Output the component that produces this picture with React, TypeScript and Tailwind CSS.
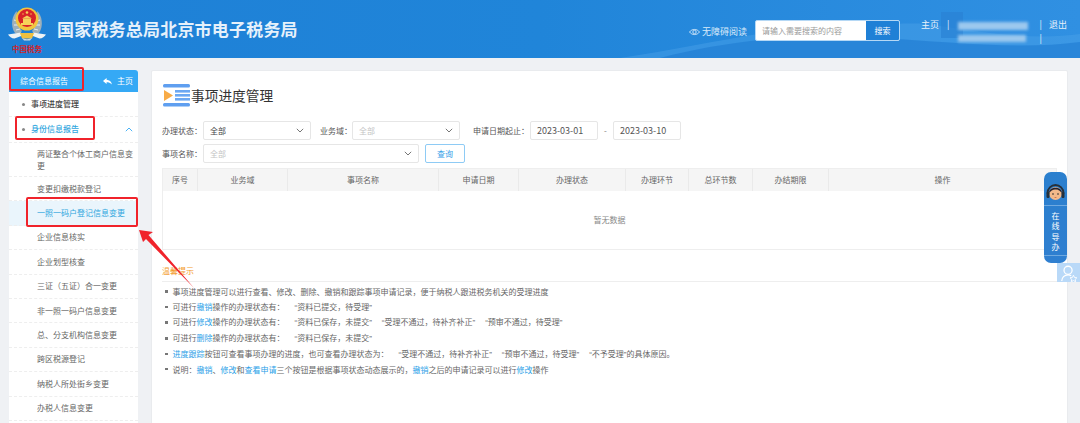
const MENU = [
  { label: '两证整合个体工商户信息变更', tall: true },
  { label: '变更扣缴税款登记' },
  { label: '一照一码户登记信息变更', active: true },
  { label: '企业信息核实' },
  { label: '企业划型核查' },
  { label: '三证（五证）合一变更' },
  { label: '非一照一码户信息变更' },
  { label: '总、分支机构信息变更' },
  { label: '跨区税源登记' },
  { label: '纳税人所处街乡变更' },
  { label: '办税人信息变更' },
]

const COLUMNS = [
  { label: '序号', w: 'w-[35px]' },
  { label: '业务域', w: 'w-[90px]' },
  { label: '事项名称', w: 'w-[151px]' },
  { label: '申请日期', w: 'w-[80px]' },
  { label: '办理状态', w: 'w-[107px]' },
  { label: '办理环节', w: 'w-[63px]' },
  { label: '总环节数', w: 'w-[64px]' },
  { label: '办结期限', w: 'w-[76px]' },
  { label: '操作', w: 'flex-1' },
]

function Emblem() {
  return (
    <svg width="38" height="35" viewBox="0 0 38 35" className="shrink-0">
      <path d="M7 27C2 20 4 9 9 5c-1 7 0 14 5 20l-3 3z" fill="#9fb0ba" />
      <path d="M31 27c5-7 3-18-2-22 1 7 0 14-5 20l3 3z" fill="#9fb0ba" />
      <path d="M8 9l3 2M6 14l4 1M6 19l4 0M8 24l4-1M30 9l-3 2M32 14l-4 1M32 19l-4 0M30 24l-4-1" stroke="#e8edf0" strokeWidth="1" />
      <path d="M0 28.500l13-2 1.500 3-8 3c-3 0-5-2-6.500-4zM38 28.500l-13-2-1.500 3 8 3c3 0 5-2 6.500-4z" fill="#eef2f4" />
      <path d="M12 27h14l-2 5.500h-10z" fill="#efc040" />
      <path d="M14 32c3 1.500 7 1.500 10 0l-2 2.500h-6z" fill="#cfd8de" />
      <circle cx="19" cy="13" r="11.500" fill="#f2c53f" />
      <circle cx="19" cy="12" r="9" fill="#d8232a" />
      <path d="M13 17h12v2H13zM15 12.500h8v4.500h-8z" fill="#f6d25a" />
      <path d="M14 12.500h10l-5-3z" fill="#f6d25a" />
      <circle cx="19" cy="6.500" r="1.300" fill="#f6d25a" />
      <circle cx="15" cy="8" r="0.700" fill="#f6d25a" />
      <circle cx="23" cy="8" r="0.700" fill="#f6d25a" />
    </svg>
  )
}

function Mountains() {
  return (
    <svg viewBox="0 0 1080 58" preserveAspectRatio="none" className="absolute inset-0 h-full w-full">
      <path d="M620 58C700 46 760 30 850 22c30 6 60-2 90 4 50 8 100 14 140 8v24z" fill="#4ba2e8" opacity="0.45" />
      <rect x="941" y="12" width="22" height="26" fill="#2a82d4" opacity="0.7" />
      <path d="M660 58c70-18 150-26 220-20 70 4 140 12 200 4v16z" fill="#1c78cf" opacity="0.55" />
    </svg>
  )
}

function Chevron({ className }: { className: string }) {
  return (
    <svg width="8" height="5" viewBox="0 0 8 5" fill="none" className={className}>
      <path d="M.8.8 4 4l3.2-3.2" stroke="currentColor" strokeWidth="0.9" />
    </svg>
  )
}

function Header() {
  return (
    <header className="relative flex h-[58px] items-center bg-gradient-to-r from-[#1e80d6] via-[#2085d9] to-[#3090e2] text-white">
      <Mountains />
      <div className="relative ml-[8px] flex w-[38px] flex-col items-center pt-[1px]">
        <Emblem />
        <span className="mt-[3px] whitespace-nowrap text-[7.5px] leading-[9px] font-bold text-[#d3232a]">中国税务</span>
      </div>
      <h1 className="relative ml-[11px] text-[17px] font-bold tracking-[0.2px] text-[#e6f1fb]">国家税务总局北京市电子税务局</h1>
      <div className="relative ml-auto flex items-center pr-[13px] pt-[2px]">
        <svg width="11" height="8" viewBox="0 0 11 8" fill="none" stroke="#e6f1fb" strokeWidth="0.8" className="mr-[2px] mt-[3px]">
          <path d="M.5 4C3 .6 8 .6 10.5 4 8 7.4 3 7.4.5 4z" />
          <circle cx="5.5" cy="4" r="1.7" />
        </svg>
        <span className="mt-[3px] text-[9px] text-[#d9ebfa]">无障碍阅读</span>
        <div className="ml-[8px] flex h-[21px] w-[145px] overflow-hidden rounded-[2px] border border-[#b5d8f5] bg-white">
          <span className="flex-1 pl-[6px] text-[8px] leading-[19px] text-[#9a9a9a]">请输入需要搜索的内容</span>
          <span className="w-[33px] bg-[#1f80d6] text-center text-[8px] leading-[19px] text-white">搜索</span>
        </div>
        <div className="mt-[4px] ml-[21px] flex items-start text-[9px] leading-[14px] text-[#e6f1fb]">
          <span>主页</span>
          <span className="ml-[8px]">|</span>
          <div className="ml-[6px] w-[73px]">
            <div className="mt-[4px] ml-[2px] h-[8px] w-[70px] bg-[#9cc8ee] blur-[1.5px]" />
            <div className="mt-[5px] ml-[2px] h-[7px] w-[68px] bg-[#9cc8ee] blur-[1.5px]" />
          </div>
          <div className="ml-[11px] flex flex-col">
            <span>|</span>
            <span>|</span>
          </div>
          <span className="ml-[7px]">退出</span>
        </div>
      </div>
    </header>
  )
}

function Sidebar() {
  return (
    <aside className="ml-[9px] h-[365px] w-[129px] shrink-0 overflow-hidden rounded-t-[3px] bg-white text-[8px] text-[#666]">
      <div className="flex h-[22px] items-center justify-between bg-[#35a9f5] pl-[11px] pr-[5px] text-[8px] text-white">
        <span>综合信息报告</span>
        <span className="flex items-center gap-[5px]">
          <svg width="9" height="7" viewBox="0 0 9 7" fill="#fff">
            <path d="M3.6 0 0 3l3.6 3V4.2c2 0 3.8.4 5.4 2.3C8.4 3.600 6.300 2 3.600 1.800z" />
          </svg>
          主页
        </span>
      </div>
      <div className="flex h-[25px] items-center border-b border-dashed border-[#eee] pl-[13px] font-medium text-[#444]">
        <span className="mr-[6px] size-[3px] rounded-full bg-[#888]" />
        事项进度管理
      </div>
      <div className="flex h-[26px] items-center justify-between border-b border-dashed border-[#eee] pb-[1px] pl-[13px] pr-[5px] font-medium text-[#2fa6de]">
        <span className="flex items-center">
          <span className="mr-[6px] size-[3px] rounded-full bg-[#888]" />
          身份信息报告
        </span>
        <Chevron className="rotate-180 text-[#35a9f5]" />
      </div>
      {MENU.map(item => (
        <div
          key={item.label}
          className={`flex items-center border-b border-dashed border-[#eee] pl-[28px] pr-[5px] leading-[12px] ${item.tall ? 'h-[34px]' : 'h-[24.4px]'} ${item.active ? 'bg-[#eaf5fc] text-[#2fa6de]' : ''}`}
        >
          {item.label}
        </div>
      ))}
    </aside>
  )
}

function Field({ label, className, children }: { label: string; className: string; children: React.ReactNode }) {
  return (
    <>
      <span className={`text-[8px] text-[#555] ${className}`}>{label}</span>
      {children}
    </>
  )
}

function Select({ value, className, muted }: { value: string; className: string; muted?: boolean }) {
  return (
    <div className={`flex h-[19px] items-center justify-between rounded-[2px] border border-[#e6e6e6] pl-[6px] pr-[6px] text-[8px] ${muted ? 'text-[#c4c4c4]' : 'text-[#444]'} ${className}`}>
      {value}
      <Chevron className="text-[#666]" />
    </div>
  )
}

function DateBox({ value }: { value: string }) {
  return (
    <div className="flex h-[19px] w-[68px] items-center rounded-[2px] border border-[#e6e6e6] pl-[6px] text-[9px] text-[#555]">
      {value}
    </div>
  )
}

function Q({ children }: { children: React.ReactNode }) {
  return (
    <span className="ml-[10px]">
      <span className="font-['Liberation_Sans']">“</span>
      {children}
      <span className="font-['Liberation_Sans']">”</span>
    </span>
  )
}

function Tip({ children }: { children: React.ReactNode }) {
  return (
    <li className="flex items-center pl-[3px]">
      <span className="mr-[5px] size-[2.5px] shrink-0 bg-[#777]" />
      <span className="whitespace-nowrap">{children}</span>
    </li>
  )
}

function Tips() {
  const link = 'text-[#2b9fe8]'
  return (
    <ul className="mt-[4px] space-y-[3.3px] text-[8px] leading-[11.4px] text-[#666]">
      <Tip>事项进度管理可以进行查看、修改、删除、撤销和跟踪事项申请记录，便于纳税人跟进税务机关的受理进度</Tip>
      <Tip>可进行<span className={link}>撤销</span>操作的办理状态有：<Q>资料已提交，待受理</Q></Tip>
      <Tip>可进行<span className={link}>修改</span>操作的办理状态有：<Q>资料已保存，未提交</Q><Q>受理不通过，待补齐补正</Q><Q>预审不通过，待受理</Q></Tip>
      <Tip>可进行<span className={link}>删除</span>操作的办理状态有：<Q>资料已保存，未提交</Q></Tip>
      <Tip><span className={link}>进度跟踪</span>按钮可查看事项办理的进度，也可查看办理状态为：<Q>受理不通过，待补齐补正</Q><Q>预审不通过，待受理</Q><Q>不予受理</Q>的具体原因。</Tip>
      <Tip>说明：<span className={link}>撤销</span>、<span className={link}>修改</span>和<span className={link}>查看申请</span>三个按钮是根据事项状态动态展示的，<span className={link}>撤销</span>之后的申请记录可以进行<span className={link}>修改</span>操作</Tip>
    </ul>
  )
}

function Main() {
  return (
    <main className="ml-[13px] h-[365px] w-[917px] shrink-0 rounded-t-[2px] border border-[#e9ebee] bg-white px-[10px]">
      <div className="mt-[12px] flex h-[24px] items-center pl-[1px]">
        <svg width="28" height="24" viewBox="0 0 28 24" className="shrink-0">
          <rect x="0" y="1" width="27" height="3.4" rx="1.5" fill="#5f9ff0" />
          <rect x="12" y="7" width="15" height="2.6" fill="#6da8f2" />
          <rect x="12" y="11" width="15" height="2.6" fill="#6da8f2" />
          <rect x="12" y="15" width="15" height="2.6" fill="#6da8f2" />
          <rect x="0" y="20" width="27" height="3.4" rx="1.5" fill="#5f9ff0" />
          <path d="M1 7l9 5.5-9 5.500z" fill="#f8ab47" />
        </svg>
        <h2 className="text-[13.7px] font-normal text-[#333]">事项进度管理</h2>
      </div>
      <div className="mt-[14px] flex h-[19px] items-center">
        <Field label="办理状态：" className="w-[41px]">
          <Select value="全部" className="w-[108px]" />
        </Field>
        <Field label="业务域：" className="ml-[9px] w-[32px]">
          <Select value="全部" muted className="w-[108px]" />
        </Field>
        <Field label="申请日期起止：" className="ml-[13px] w-[57px]">
          <DateBox value="2023-03-01" />
        </Field>
        <span className="mx-[4px] w-[7px] text-center text-[8px] text-[#777]">-</span>
        <DateBox value="2023-03-10" />
      </div>
      <div className="mt-[4px] flex h-[19px] items-center">
        <Field label="事项名称：" className="w-[41px]">
          <Select value="全部" muted className="w-[216px]" />
        </Field>
        <button className="ml-[6px] h-[19px] w-[40px] rounded-[2px] border border-[#8ecbf5] bg-white text-[8px] text-[#35a0e8]">查询</button>
      </div>
      <div className="mt-[5px] h-[82px] w-[895px] border border-[#eee]">
        <div className="flex h-[22px] bg-[#f5f5f5] text-[8px] text-[#666]">
          {COLUMNS.map(col => (
            <div key={col.label} className={`flex items-center justify-center border-r border-[#eaeaea] last:border-r-0 ${col.w}`}>
              {col.label}
            </div>
          ))}
        </div>
        <div className="flex h-[58px] items-center justify-center text-[8px] text-[#888]">暂无数据</div>
      </div>
      <div className="mt-[15px] border-b border-[#eee] pb-[4px] text-[8px] leading-[12px] text-[#f39a2b]">温馨提示</div>
      <Tips />
    </main>
  )
}

function Annotations() {
  return (
    <div className="pointer-events-none absolute inset-0">
      <div className="absolute left-[9px] top-[67px] h-[24px] w-[75px] rounded-[2px] border-2 border-[#f0232b]" />
      <div className="absolute left-[15px] top-[116px] h-[24px] w-[80px] rounded-[2px] border-2 border-[#f0232b]" />
      <div className="absolute left-[26px] top-[197px] h-[30px] w-[112px] rounded-[2px] border-2 border-[#f0232b]" />
      <svg width="70" height="70" viewBox="0 0 70 70" className="absolute left-[136px] top-[226px]">
        <path d="M3 4 17 6l-4.500 3L58 62 10 13l-3 3z" fill="#f0232b" />
      </svg>
    </div>
  )
}

function Assistant() {
  return (
    <div className="absolute right-0 top-[172px] flex w-[36px] flex-col items-start">
      <div className="flex h-[91px] w-[23px] flex-col items-center rounded-[7px] bg-gradient-to-b from-[#2a7fce] to-[#2f7fd0]">
        <svg width="21" height="20" viewBox="0 0 21 20" className="mt-[10px]">
          <path d="M2.500 11a8 8 0 0 1 16 0" fill="none" stroke="#26303a" strokeWidth="1.800" />
          <circle cx="10.500" cy="11.500" r="6.500" fill="#f2b98a" />
          <path d="M4 11c0-7 13-7 13 0-3-3-4-3.500-6.500-3.500S7 8 4 11z" fill="#262430" />
          <rect x="1.500" y="10" width="3" height="6" rx="1.200" fill="#26303a" />
          <rect x="16.500" y="10" width="3" height="6" rx="1.200" fill="#26303a" />
          <circle cx="8" cy="12" r="0.800" fill="#222" />
          <circle cx="13" cy="12" r="0.800" fill="#222" />
          <path d="M9 15h3l-1.500 1z" fill="#c9683f" />
        </svg>
        <div className="mt-[3px] h-px w-full bg-[#6fa9e0]" />
        <div className="mt-[5px] text-center text-[8px] leading-[10.3px] text-white">
          <div>在</div>
          <div>线</div>
          <div>导</div>
          <div>办</div>
        </div>
        <div className="mt-[3px] h-px w-full bg-[#6fa9e0]" />
      </div>
      <div className="ml-[13px] flex h-[19px] w-[23px] items-center justify-center bg-[#b9d9f8]">
        <svg width="19" height="18" viewBox="0 0 21 20" fill="none" stroke="#fff" strokeWidth="1.400">
          <circle cx="10" cy="7" r="4.500" />
          <path d="M3 19c0-4 3-7 7-7 1.500 0 2.500.4 3.500 1" />
          <path d="M16 12.500l1.200 2.500 2.600.3-1.900 1.800.5 2.600-2.400-1.300-2.400 1.300.5-2.600-1.900-1.800 2.600-.3z" strokeWidth="1" />
        </svg>
      </div>
    </div>
  )
}

export default function App() {
  return (
    <div
      className="relative h-[423px] w-[1080px] overflow-hidden bg-[#eff1f4]"
      style={{ fontFamily: '"Noto Sans CJK SC", "Noto Sans", sans-serif' }}
    >
      <Header />
      <div className="mt-[12px] flex">
        <Sidebar />
        <Main />
      </div>
      <Annotations />
      <Assistant />
    </div>
  )
}
